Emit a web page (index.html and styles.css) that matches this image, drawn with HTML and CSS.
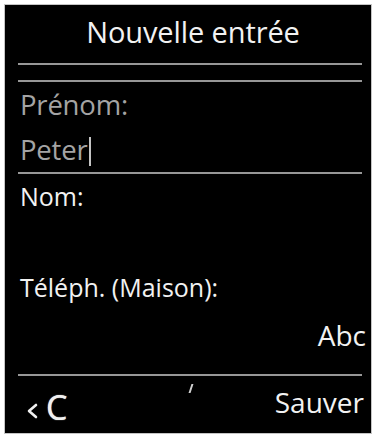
FILE: index.html
```html
<!DOCTYPE html>
<html lang="fr">
<head>
<meta charset="utf-8">
<title>Nouvelle entrée</title>
<link rel="stylesheet" href="styles.css">
</head>
<body>
<div class="screen">
  <div class="title">Nouvelle entrée</div>
  <div class="rule rule-a"></div>
  <div class="rule rule-b"></div>
  <div class="row dim">Prénom:</div>
  <div class="row dim">Peter<span class="cursor"></span></div>
  <div class="rule rule-c"></div>
  <div class="row">Nom:</div>
  <div class="row empty"></div>
  <div class="row">Téléph. (Maison):</div>
  <div class="row right abc">Abc</div>
  <div class="rule rule-d"></div>
  <div class="footer">
    <div class="back">
      <svg class="chev" width="12" height="16" viewBox="0 0 12 16"><polyline points="10,2 3,8 10,14" fill="none" stroke="#f0f0f0" stroke-width="2.6" stroke-linecap="round" stroke-linejoin="round"/></svg>
      <span class="clr">C</span>
    </div>
    <span class="tick"></span>
    <div class="save">Sauver</div>
  </div>
</div>
</body>
</html>
```

FILE: styles.css
```css
html, body {
  margin: 0;
  padding: 0;
  background: #ffffff;
}

.screen {
  margin: 4px 0 0 4px;
  background: #000000;
  border: 1px solid #c4c4c4;
  padding: 7px 9px 0 13px;
  box-sizing: border-box;
  width: 368px;
  height: 430px;
  font-family: "Open Sans", "DejaVu Sans", sans-serif;
  color: #f2f2f2;
  overflow: hidden;
}

.title {
  font-size: 29px;
  line-height: 40px;
  height: 40px;
  text-align: center;
  letter-spacing: -0.1px;
  padding-left: 6px;
}

.rule {
  height: 2px;
  background: #979797;
}

.rule-a { margin-top: 11px; }
.rule-b { margin-top: 15px; }
.rule-c { margin-top: 0; }
.rule-d { margin-top: 16px; }

.row {
  font-size: 25px;
  line-height: 45px;
  height: 45px;
  padding-left: 2px;
  white-space: nowrap;
}

.row.dim {
  color: #a4a4a4;
  font-size: 27.5px;
  letter-spacing: -0.2px;
}

.row.empty {
  height: 46px;
}

.row.right {
  text-align: right;
  margin-right: -4px;
}

.row.abc {
  font-size: 28px;
  margin-top: 3px;
}

.cursor {
  display: inline-block;
  width: 2px;
  height: 29px;
  background: #c4c4c4;
  vertical-align: -6px;
  margin-left: 2px;
}

.footer {
  display: grid;
  grid-template-columns: 1fr auto 1fr;
  height: 44px;
  margin-top: 6px;
  margin-right: -2px;
}

.back {
  display: flex;
  align-items: flex-end;
  padding-left: 8px;
  gap: 8px;
}

.chev {
  margin-bottom: 7px;
}

.clr {
  font-size: 34px;
  line-height: 33px;
  font-weight: 400;
  color: #f0f0f0;
  text-shadow: 0 0 1px #ffffff;
  margin-bottom: 2px;
}

.tick {
  align-self: start;
  width: 2px;
  height: 9px;
  margin-top: 2px;
  background: #d0d0d0;
  transform: skewX(-18deg);
}

.save {
  font-size: 28px;
  line-height: 40px;
  text-align: right;
}
```
